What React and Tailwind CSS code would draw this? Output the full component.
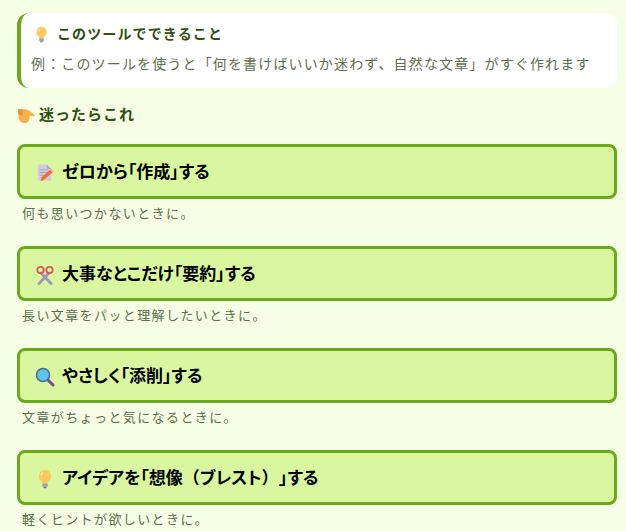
import React from 'react';

const Bulb = ({ size = 18 }) => (
  <svg width={size} height={size} viewBox="0 0 20 20" className="shrink-0">
    <path d="M10 1a6.200 6.200 0 0 0-3.800 11c.8.7 1 1.400 1 2.500h5.600c0-1.100.2-1.800 1-2.500A6.200 6.200 0 0 0 10 1z" fill="#fbc95e" />
    <path d="M7.800 3.500a4 4 0 0 0-1.500 3" stroke="#fdeec0" strokeWidth="1.200" fill="none" />
    <rect x="7.300" y="14.500" width="5.400" height="3.300" rx=".8" fill="#a79abf" />
    <rect x="8.500" y="17.800" width="3" height="1.400" rx=".7" fill="#6f5f8c" />
  </svg>
);

const Memo = () => (
  <svg width="18" height="19" viewBox="0 0 20 20" className="shrink-0">
    <path d="M2 1h10l5 5v13H2z" fill="#d5cce0" />
    <path d="M12 1l5 5h-5z" fill="#b0a4c2" />
    <path d="M4 7h9M4 10h9M4 13h6" stroke="#a99cba" strokeWidth="1" />
    <path d="M6 15.500L15.500 7l3 3L8 18.800l-3 .5z" fill="#f0703c" />
    <path d="M15.500 7l1.200-1.100 3 3L18.500 10z" fill="#f5a8a0" />
  </svg>
);

const Scissors = () => (
  <svg width="20" height="20" viewBox="0 0 20 20" className="shrink-0">
    <path d="M6 8l10 10.500M14 8L4 18.500" stroke="#a396b8" strokeWidth="2.800" strokeLinecap="round" />
    <circle cx="5.500" cy="5" r="3.200" fill="none" stroke="#d9584f" strokeWidth="1.800" />
    <circle cx="14.500" cy="5" r="3.200" fill="none" stroke="#d9584f" strokeWidth="1.800" />
  </svg>
);

const Magnifier = () => (
  <svg width="20" height="20" viewBox="0 0 20 20" className="shrink-0">
    <path d="M12.500 12.500l5.500 5.500" stroke="#7a4a8c" strokeWidth="3" strokeLinecap="round" />
    <circle cx="8" cy="8" r="6.500" fill="#5cc4ee" stroke="#4a6f8c" strokeWidth="1.500" />
  </svg>
);

const Pointing = () => (
  <svg width="18" height="18" viewBox="0 0 20 20" className="shrink-0">
    <path d="M1 3.500h8c2 0 3.500.8 5 2l5 4c1.200 1 .2 2.300-1.400 1.900L14 10.500l-.5 4.500c-.3 2.800-2.500 4-5 4C5 19 2.500 17 2 14z" fill="#f9b04a" />
    <path d="M1 3.500h5l.5 6.500H2z" fill="#ef8f2f" />
  </svg>
);

const ITEMS = [
  { icon: <Memo />, label: 'ゼロから「作成」する', note: '何も思いつかないときに。' },
  { icon: <Scissors />, label: '大事なとこだけ「要約」する', note: '長い文章をパッと理解したいときに。' },
  { icon: <Magnifier />, label: 'やさしく「添削」する', note: '文章がちょっと気になるときに。' },
  {
    icon: <Bulb size={20} />,
    // 丸括弧だけ全角のまま残す
    label: (
      <>
        アイデアを「想像
        <span className="[font-feature-settings:normal]">（</span>
        ブレスト
        <span className="[font-feature-settings:normal] mr-[9px]">）</span>
        」する
      </>
    ),
    note: '軽くヒントが欲しいときに。',
  },
];

export default function App() {
  return (
    <div className="w-[626px] h-[531px] overflow-hidden bg-[#f6ffe6] pt-[13px] pl-[17px] pr-[9px] font-['Liberation_Sans','Noto_Sans_CJK_JP',sans-serif]">
      {/* 説明ボックス */}
      <div className="h-[75px] bg-white rounded-xl border-l-4 border-[#6aa81c] pl-[10px] pt-[11px]">
        <div className="flex items-center gap-[7px] pl-[2px] text-[14px] leading-[20px] font-bold tracking-[1.12px] text-[#2f5010]">
          <Bulb size={17} />
          <span>このツールでできること</span>
        </div>
        <p className="mt-[10px] text-[14px] leading-[20px] tracking-[1.15px] text-[#5c7048]">
          例：このツールを使うと「何を書けばいいか迷わず、自然な文章」がすぐ作れます
        </p>
      </div>

      <div className="mt-[16px] flex items-center gap-[4px] text-[15px] leading-[22px] font-bold tracking-[1px] text-[#2f5010]">
        <Pointing />
        <span>迷ったらこれ</span>
      </div>

      <div className="mt-[18px] flex flex-col gap-[23px]">
        {ITEMS.map((item) => (
          <div key={item.note}>
            <button className="w-full h-[55px] flex items-center gap-[7px] pl-[15px] pt-[2px] bg-[#d9f79f] border-[3px] border-[#6aa81c] rounded-lg text-black text-[17px] font-bold [font-feature-settings:'palt']">
              <span className="w-[20px] flex justify-center">{item.icon}</span>
              <span>{item.label}</span>
            </button>
            <p className="mt-[6px] pl-[5px] text-[13px] leading-[18px] tracking-[1.4px] text-[#5c7048]">{item.note}</p>
          </div>
        ))}
      </div>
    </div>
  );
}
